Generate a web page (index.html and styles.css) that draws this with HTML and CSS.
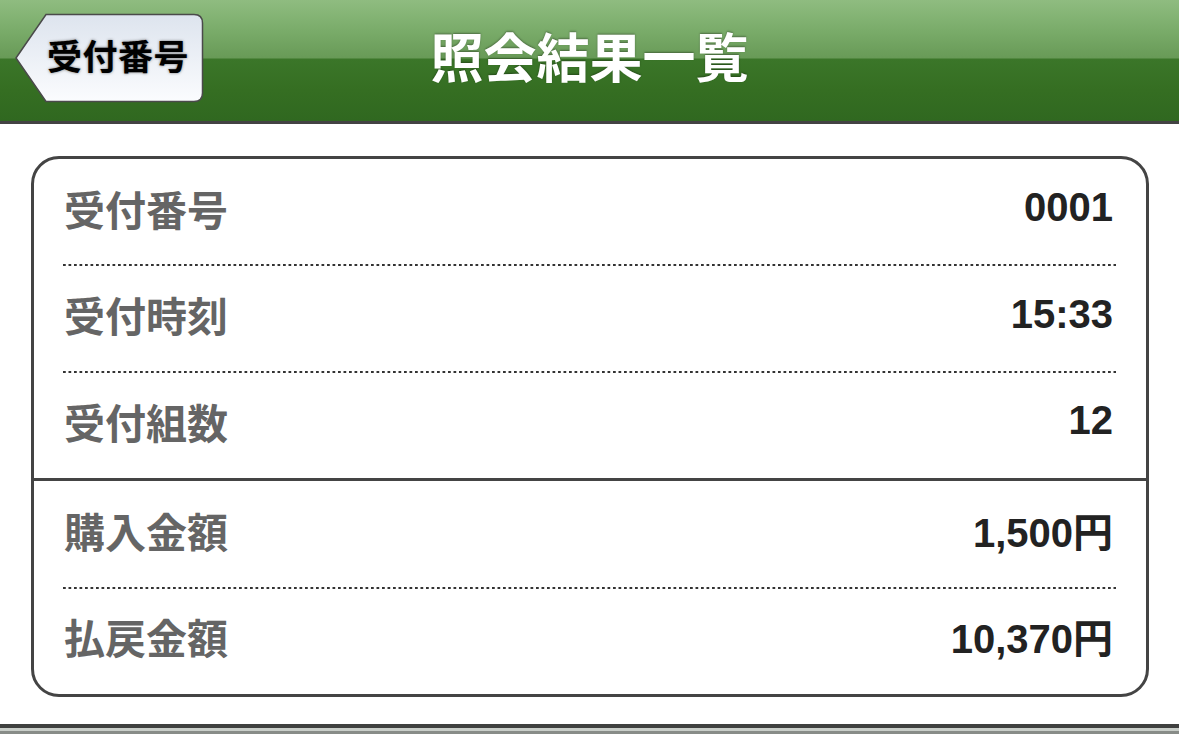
FILE: index.html
```html
<!DOCTYPE html>
<html lang="ja">
<head>
<meta charset="utf-8">
<title>照会結果一覧</title>
<link rel="stylesheet" href="styles.css">
</head>
<body>
<header class="nav">
  <div class="nav-left">
    <a class="back" href="#">
      <svg class="back-shape" viewBox="0 0 189 90" preserveAspectRatio="none" aria-hidden="true">
        <defs>
          <linearGradient id="bg" x1="0" y1="0" x2="0" y2="1">
            <stop offset="0" stop-color="#dde4ee"/>
            <stop offset="1" stop-color="#fbfcfe"/>
          </linearGradient>
        </defs>
        <path d="M1 45 L31 1.5 H179 Q187.5 1.5 187.5 10 V80 Q187.5 88.5 179 88.5 H31 Z" fill="url(#bg)" stroke="#4a4a4a" stroke-width="1.5"/>
      </svg>
      <span class="back-label">受付番号</span>
    </a>
  </div>
  <h1 class="title">照会結果一覧</h1>
  <div class="nav-right"></div>
</header>

<main class="content">
  <section class="card">
    <div class="row dotted">
      <span class="label">受付番号</span><span class="value">0001</span>
    </div>
    <div class="row dotted">
      <span class="label">受付時刻</span><span class="value">15:33</span>
    </div>
    <div class="row solid">
      <span class="label">受付組数</span><span class="value">12</span>
    </div>
    <div class="row dotted">
      <span class="label">購入金額</span><span class="value">1,500円</span>
    </div>
    <div class="row">
      <span class="label">払戻金額</span><span class="value">10,370円</span>
    </div>
  </section>
</main>

<footer class="bottom"></footer>
</body>
</html>
```

FILE: styles.css
```css
* { box-sizing: border-box; }

html, body {
  margin: 0;
  padding: 0;
  background: #ffffff;
  width: 1179px;
  height: 734px;
  overflow: hidden;
  font-family: "Liberation Sans", "Noto Sans CJK JP", sans-serif;
}

.nav {
  height: 124px;
  display: grid;
  grid-template-columns: 1fr auto 1fr;
  align-items: center;
  border-bottom: 3px solid #434343;
  background: linear-gradient(to bottom,
    #8fbc80 0px,
    #7aac6a 30px,
    #689a57 58px,
    #3b7629 59px,
    #356e22 90px,
    #306820 121px);
}

.nav-left {
  padding-left: 15px;
  display: flex;
  align-items: center;
}

.back {
  position: relative;
  width: 189px;
  height: 90px;
  margin-top: -6px;
  display: flex;
  align-items: center;
  justify-content: flex-end;
  padding: 0 15px 6px 0;
  text-decoration: none;
}

.back-shape {
  position: absolute;
  inset: 0;
  width: 100%;
  height: 100%;
}

.back-label {
  position: relative;
  font-size: 35px;
  font-weight: bold;
  color: #000;
  letter-spacing: 0.5px;
  text-shadow: 0 0 3px rgba(0, 0, 0, 0.55);
}

.title {
  margin: -12px 0 0 0;
  font-size: 53px;
  font-weight: bold;
  color: #ffffff;
  text-shadow: 0 -1px 2px rgba(0, 0, 0, 0.35);
  letter-spacing: 0;
}

.content {
  padding: 32px 30px 0 31px;
}

.card {
  height: 541px;
  border: 3px solid #444444;
  border-radius: 28px;
  display: flex;
  flex-direction: column;
}

.row {
  flex: 1;
  display: flex;
  align-items: center;
  justify-content: space-between;
  padding: 0 33px 9px 30px;
  position: relative;
}

.row.dotted::after {
  content: "";
  position: absolute;
  left: 29px;
  right: 30px;
  bottom: -1px;
  height: 2px;
  background-image: linear-gradient(to right, #333333 0, #333333 3px, transparent 3px, transparent 5.5px);
  background-size: 5.5px 2px;
  background-repeat: repeat-x;
}

.row.solid {
  border-bottom: 3px solid #444444;
}

.label {
  font-size: 41px;
  font-weight: bold;
  color: #656565;
}

.value {
  font-size: 40px;
  font-weight: bold;
  color: #222222;
}

.bottom {
  margin-top: 27px;
  height: 10px;
  background: linear-gradient(to bottom,
    #3f403f 0, #3f403f 4px,
    #c9cec9 4px, #c9cec9 7px,
    #888c88 7px, #888c88 10px);
}
```
